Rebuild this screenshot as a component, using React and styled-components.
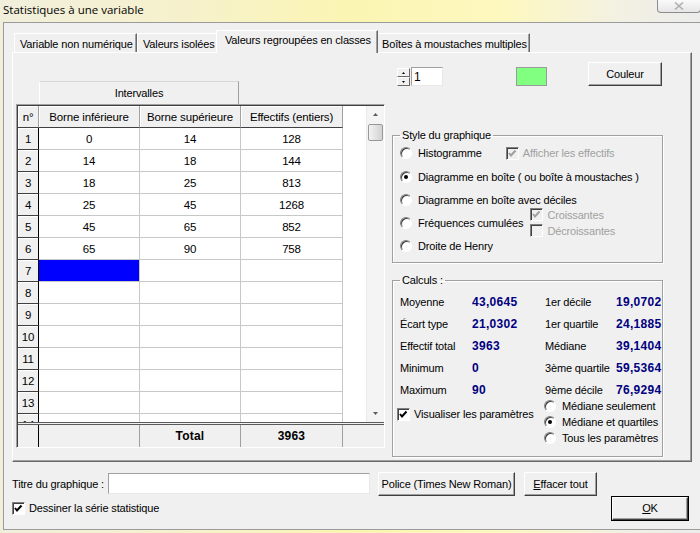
import styled, { createGlobalStyle } from "styled-components";

const GlobalStyle = createGlobalStyle`
  html, body {
    margin: 0;
    padding: 0;
  }
  body {
    width: 700px;
    height: 533px;
    overflow: hidden;
    background: #f0f0f0;
    font-family: "Liberation Sans", Arial, sans-serif;
    font-size: 11px;
    letter-spacing: -0.15px;
    color: #000;
  }
  * {
    box-sizing: border-box;
  }
`;

const Window = styled.div`
  width: 700px;
  height: 533px;
  display: flex;
  flex-direction: column;
  background: linear-gradient(90deg, #f1efdc 0%, #f6f1cd 25%, #fbf5b3 50%, #fdf8bf 72%, #f3f1e2 88%, #ececec 100%);
`;

const TitleBar = styled.div`
  height: 22px;
  display: flex;
  align-items: flex-start;
  justify-content: space-between;
`;

const Title = styled.div`
  font-family: "Open Sans", "Liberation Sans", sans-serif;
  font-size: 11.5px;
  letter-spacing: 0;
  padding: 2px 0 0 3px;
  color: #000;
`;

const CloseBtn = styled.div`
  width: 44px;
  height: 13px;
  border: 1px solid #8c8c8c;
  border-top: none;
  border-radius: 0 0 4px 4px;
  background: linear-gradient(#fafafa, #e6e6e6);
  display: flex;
  align-items: center;
  justify-content: center;
  margin-right: -1px;
`;

const Body = styled.div`
  flex: 1;
  margin: 0 0 3px 3px;
  border-top: 1px solid #9a9a9a;
  border-left: 1px solid #9a9a9a;
  border-bottom: 1px solid #9a9a9a;
  background: #f0f0f0;
  padding: 7px 8px 0 8px;
  display: flex;
  flex-direction: column;
`;

const TabStrip = styled.div`
  height: 22px;
  display: flex;
  align-items: flex-end;
  padding-left: 2px;
`;

const Tab = styled.div`
  width: ${(p) => p.$w}px;
  height: ${(p) => (p.$active ? 23 : 19)}px;
  margin-bottom: ${(p) => (p.$active ? -1 : 0)}px;
  margin-left: ${(p) => (p.$active ? -2 : 0)}px;
  margin-right: ${(p) => (p.$active ? -2 : 0)}px;
  position: relative;
  z-index: ${(p) => (p.$active ? 2 : 1)};
  background: #f0f0f0;
  border-top: 1px solid #fff;
  border-left: 1px solid #fff;
  border-right: 1px solid #696969;
  box-shadow: inset -1px 0 #a0a0a0;
  padding: ${(p) => (p.$active ? "3px 0 0 8px" : "4px 0 0 5px")};
  white-space: nowrap;
`;

const Panel = styled.div`
  height: 410px;
  border-top: 1px solid #fff;
  border-left: 1px solid #fff;
  border-right: 1px solid #696969;
  border-bottom: 1px solid #696969;
  box-shadow: inset -1px -1px #a0a0a0;
  padding: 9px 0 0 3px;
  display: flex;
  gap: 7px;
`;

const LeftCol = styled.div`
  width: 369px;
  padding-top: 19px;
  display: flex;
  flex-direction: column;
`;

const GroupHeader = styled.div`
  margin-left: 23px;
  width: 200px;
  height: 23px;
  background: #f0f0f0;
  border-top: 1px solid #d8d8d8;
  border-left: 1px solid #fff;
  border-right: 1px solid #a0a0a0;
  display: flex;
  align-items: center;
  justify-content: center;
`;

const GridFrame = styled.div`
  border-top: 1px solid #a0a0a0;
  border-left: 1px solid #a0a0a0;
  border-right: 1px solid #fff;
  border-bottom: 1px solid #fff;
  height: 344px;
`;

const GridInner = styled.div`
  height: 100%;
  border-top: 1px solid #404040;
  border-left: 1px solid #404040;
  background: #fff;
  display: flex;
  flex-direction: column;
`;

const GridBody = styled.div`
  height: 317px;
  display: flex;
  overflow: hidden;
`;

const Rows = styled.div`
  flex: 1;
  overflow: hidden;
`;

const Row = styled.div`
  display: flex;
  height: 22px;
`;

const kinds = {
  head: "background:#f0f0f0;border-right:1px solid #a0a0a0;border-bottom:1px solid #404040;box-shadow: inset 1px 1px #fff;",
  rowhead: "background:#f0f0f0;border-right:1px solid #000;border-bottom:1px solid #404040;box-shadow: inset 1px 1px #fff;",
  data: "background:#fff;border-right:1px solid #c8c8c8;border-bottom:1px solid #c8c8c8;",
  sel: "background:#0000ff;border-right:1px solid #c8c8c8;border-bottom:1px solid #c8c8c8;",
  total: "background:#f0f0f0;border-right:1px solid #a0a0a0;font-weight:bold;font-size:12px;letter-spacing:0.2px;",
  totalhead: "background:#f0f0f0;border-right:1px solid #000;",
};

const Cell = styled.div`
  width: ${(p) => p.$w}px;
  flex-shrink: 0;
  height: 22px;
  display: flex;
  align-items: center;
  justify-content: center;
  font-size: 11.5px;
  ${(p) => kinds[p.$kind]}
`;

const Filler = styled.div`
  flex: 1;
  background: ${(p) => (p.$gray ? "#f0f0f0" : "#fff")};
`;

const ScrollBar = styled.div`
  width: 18px;
  background: #f4f4f4;
  border-left: 1px solid #eaeaea;
  display: flex;
  flex-direction: column;
  align-items: center;
`;

const ScrollArrow = styled.div`
  height: 17px;
  display: flex;
  align-items: center;
  justify-content: center;
`;

const Thumb = styled.div`
  width: 15px;
  height: 17px;
  border: 1px solid #979797;
  border-radius: 2px;
  background: linear-gradient(90deg, #f3f3f3, #e2e2e2 50%, #d2d2d2);
  margin-top: 1px;
`;

const Track = styled.div`
  flex: 1;
`;

const TotalRow = styled.div`
  display: flex;
  height: 25px;
  border-top: 3px double #5a5a5a;
  background: #f0f0f0;
`;

const RightCol = styled.div`
  width: 271px;
  display: flex;
  flex-direction: column;
`;

const TopRow = styled.div`
  height: 24px;
  display: flex;
  align-items: flex-end;
  padding-left: 5px;
`;

const Spinner = styled.div`
  width: 13px;
  height: 18px;
  display: flex;
  flex-direction: column;
`;

const SpinBtn = styled.div`
  flex: 1;
  background: #f0f0f0;
  border-top: 1px solid #fff;
  border-left: 1px solid #fff;
  border-right: 1px solid #696969;
  border-bottom: 1px solid #696969;
  display: flex;
  align-items: center;
  justify-content: center;
`;

const NumInput = styled.div`
  width: 32px;
  height: 19px;
  margin-left: 1px;
  background: #fff;
  border-top: 1px solid #a0a0a0;
  border-left: 1px solid #a0a0a0;
  border-right: 1px solid #e8e8e8;
  border-bottom: 1px solid #e8e8e8;
  font-size: 12px;
  padding: 2px 0 0 2px;
`;

const Swatch = styled.div`
  width: 31px;
  height: 19px;
  margin-left: 73px;
  background: #80ff80;
  border: 1px solid #9a9a9a;
`;

const Button = styled.div`
  width: ${(p) => p.$w}px;
  height: ${(p) => p.$h || 24}px;
  margin-left: ${(p) => p.$ml || 0}px;
  align-self: ${(p) => p.$self || "auto"};
  background: #f0f0f0;
  border-top: 1px solid #fff;
  border-left: 1px solid #fff;
  border-right: 1px solid #404040;
  border-bottom: 1px solid #404040;
  box-shadow: inset -1px -1px #a0a0a0;
  display: flex;
  align-items: center;
  justify-content: center;
  white-space: nowrap;
  flex-shrink: 0;
  ${(p) => p.$default && "outline: 1px solid #000;"}
`;

const Group = styled.fieldset`
  margin: ${(p) => p.$mt}px 0 0 0;
  padding: 0 0 0 7px;
  border: 1px solid #a0a0a0;
  box-shadow: 1px 1px #fff, inset 1px 1px #fff;
  height: ${(p) => p.$h}px;
  display: flex;
  flex-direction: column;
`;

const Legend = styled.legend`
  padding: 0 2px;
`;

const OptRow = styled.div`
  height: ${(p) => p.$h || 22}px;
  display: flex;
  align-items: center;
  color: ${(p) => (p.$disabled ? "#a0a0a0" : "#000")};
  white-space: nowrap;
`;

const RadioDot = styled.span`
  width: 12px;
  height: 12px;
  border-radius: 50%;
  border: 1px solid;
  border-color: #808080 #fff #fff #808080;
  box-shadow: inset 1px 1px #404040;
  background: #fff;
  margin-right: 6px;
  flex-shrink: 0;
  display: flex;
  align-items: center;
  justify-content: center;
  &::after {
    content: "";
    width: 4px;
    height: 4px;
    border-radius: 50%;
    background: ${(p) => (p.$on ? "#000" : "transparent")};
  }
`;

const CheckBox = styled.span`
  width: 13px;
  height: 13px;
  flex-shrink: 0;
  border-top: 1px solid #808080;
  border-left: 1px solid #808080;
  border-right: 1px solid #fff;
  border-bottom: 1px solid #fff;
  box-shadow: inset 1px 1px #404040;
  background: ${(p) => (p.$disabled ? "#f0f0f0" : "#fff")};
  margin-right: 4px;
  display: flex;
  align-items: center;
  justify-content: center;
`;

const Radio = ({ on, children }) => (
  <>
    <RadioDot $on={on} />
    {children}
  </>
);

const Check = ({ on, disabled, children }) => (
  <>
    <CheckBox $disabled={disabled}>
      {on && (
        <svg width="9" height="9" viewBox="0 0 9 9">
          <polyline
            points="1,4 3,6.5 7.5,1.5"
            fill="none"
            stroke={disabled ? "#a0a0a0" : "#000"}
            strokeWidth="2"
          />
        </svg>
      )}
    </CheckBox>
    {children}
  </>
);

const Pad = styled.span`
  width: ${(p) => p.$w}px;
  flex-shrink: 0;
`;

const SubChecks = styled.div`
  display: flex;
  flex-direction: column;
  margin-left: 7px;
`;

const StatGrid = styled.div`
  display: grid;
  grid-template-columns: 72px 73px 71px minmax(0, 1fr);
  grid-auto-rows: 22px;
  margin-top: 5px;
  align-items: center;
  white-space: nowrap;
`;

const Value = styled.span`
  color: #000080;
  font-weight: bold;
  font-size: 12px;
  letter-spacing: 0.3px;
`;

const ParamArea = styled.div`
  display: flex;
  margin-top: -3px;
`;

const ParamCheck = styled.div`
  width: 147px;
  margin-left: -3px;
  padding-top: 8px;
`;

const ParamRadios = styled.div`
  display: flex;
  flex-direction: column;
`;

const Footer = styled.div`
  flex: 1;
  padding-top: 9px;
  display: flex;
  flex-direction: column;
`;

const FooterRow = styled.div`
  display: flex;
  align-items: center;
  height: 25px;
`;

const FieldLabel = styled.span`
  width: 96px;
  flex-shrink: 0;
`;

const TextInput = styled.div`
  width: 262px;
  height: 21px;
  margin-right: 8px;
  background: #fff;
  border-top: 1px solid #a0a0a0;
  border-left: 1px solid #a0a0a0;
  border-right: 1px solid #e8e8e8;
  border-bottom: 1px solid #e8e8e8;
`;

const BottomRow = styled.div`
  display: flex;
  align-items: center;
  height: 24px;
`;

const OkWrap = styled.div`
  margin-left: auto;
  margin-right: 4px;
`;

const Arrow = ({ down, size = 5, color = "#000" }) => {
  const h = Math.ceil(size / 2);
  return (
    <svg width={size} height={h} viewBox={`0 0 ${size} ${h}`}>
      <polygon
        points={down ? `0,0 ${size},0 ${size / 2},${h}` : `0,${h} ${size},${h} ${size / 2},0`}
        fill={color}
      />
    </svg>
  );
};

const data = [
  ["0", "14", "128"],
  ["14", "18", "144"],
  ["18", "25", "813"],
  ["25", "45", "1268"],
  ["45", "65", "852"],
  ["65", "90", "758"],
];

const stats = [
  ["Moyenne", "43,0645", "1er décile", "19,0702"],
  ["Écart type", "21,0302", "1er quartile", "24,1885"],
  ["Effectif total", "3963", "Médiane", "39,1404"],
  ["Minimum", "0", "3ème quartile", "59,5364"],
  ["Maximum", "90", "9ème décile", "76,9294"],
];

const widths = [21, 101, 101, 102];

export default function App() {
  const rows = Array.from({ length: 14 }, (_, i) => data[i] || ["", "", ""]);

  return (
    <>
      <GlobalStyle />
      <Window>
        <TitleBar>
          <Title>Statistiques à une variable</Title>
          <CloseBtn>
            <svg width="10" height="8" viewBox="0 0 10 8">
              <path d="M1 0.5 L9 7.5 M9 0.5 L1 7.5" stroke="#b0b0b0" strokeWidth="1.6" />
            </svg>
          </CloseBtn>
        </TitleBar>

        <Body>
          <TabStrip>
            <Tab $w={123}>Variable non numérique</Tab>
            <Tab $w={81}>Valeurs isolées</Tab>
            <Tab $w={162} $active>Valeurs regroupées en classes</Tab>
            <Tab $w={154}>Boîtes à moustaches multiples</Tab>
          </TabStrip>

          <Panel>
            <LeftCol>
              <GroupHeader>Intervalles</GroupHeader>
              <GridFrame>
                <GridInner>
                  <GridBody>
                    <Rows>
                      <Row>
                        <Cell $w={widths[0]} $kind="head">n°</Cell>
                        <Cell $w={widths[1]} $kind="head">Borne inférieure</Cell>
                        <Cell $w={widths[2]} $kind="head">Borne supérieure</Cell>
                        <Cell $w={widths[3]} $kind="head">Effectifs (entiers)</Cell>
                        <Filler />
                      </Row>
                      {rows.map((r, i) => (
                        <Row key={i}>
                          <Cell $w={widths[0]} $kind="rowhead">{i + 1}</Cell>
                          <Cell $w={widths[1]} $kind={i === 6 ? "sel" : "data"}>{r[0]}</Cell>
                          <Cell $w={widths[2]} $kind="data">{r[1]}</Cell>
                          <Cell $w={widths[3]} $kind="data">{r[2]}</Cell>
                          <Filler />
                        </Row>
                      ))}
                    </Rows>
                    <ScrollBar>
                      <ScrollArrow>
                        <Arrow size={5} color="#5a5a5a" />
                      </ScrollArrow>
                      <Thumb />
                      <Track />
                      <ScrollArrow>
                        <Arrow down size={5} color="#5a5a5a" />
                      </ScrollArrow>
                    </ScrollBar>
                  </GridBody>
                  <TotalRow>
                    <Cell $w={widths[0]} $kind="totalhead" />
                    <Cell $w={widths[1]} $kind="total" />
                    <Cell $w={widths[2]} $kind="total">Total</Cell>
                    <Cell $w={widths[3]} $kind="total">3963</Cell>
                    <Filler $gray />
                  </TotalRow>
                </GridInner>
              </GridFrame>
            </LeftCol>

            <RightCol>
              <TopRow>
                <Spinner>
                  <SpinBtn>
                    <Arrow size={3} />
                  </SpinBtn>
                  <SpinBtn>
                    <Arrow down size={3} />
                  </SpinBtn>
                </Spinner>
                <NumInput>1</NumInput>
                <Swatch />
                <Button $w={74} $h={24} $ml={41} $self="flex-start">
                  Couleur
                </Button>
              </TopRow>

              <Group $h={134} $mt={43}>
                <Legend>Style du graphique</Legend>
                <OptRow $h={24}>
                  <Radio>Histogramme</Radio>
                  <Pad $w={24} />
                  <OptRow $disabled>
                    <Check on disabled>Afficher les effectifs</Check>
                  </OptRow>
                </OptRow>
                <OptRow $h={23}>
                  <Radio on>Diagramme en boîte ( ou boîte à moustaches )</Radio>
                </OptRow>
                <OptRow $h={23}>
                  <Radio>Diagramme en boîte avec déciles</Radio>
                </OptRow>
                <OptRow $h={23}>
                  <Radio>Fréquences cumulées</Radio>
                  <SubChecks>
                    <OptRow $h={16} $disabled>
                      <Check on disabled>Croissantes</Check>
                    </OptRow>
                    <OptRow $h={16} $disabled>
                      <Check disabled>Décroissantes</Check>
                    </OptRow>
                  </SubChecks>
                </OptRow>
                <OptRow $h={24}>
                  <Radio>Droite de Henry</Radio>
                </OptRow>
              </Group>

              <Group $h={183} $mt={11}>
                <Legend>Calculs :</Legend>
                <StatGrid>
                  {stats.map((s) => [
                    <span key={s[0]}>{s[0]}</span>,
                    <Value key={s[0] + "v"}>{s[1]}</Value>,
                    <span key={s[2]}>{s[2]}</span>,
                    <Value key={s[2] + "v"}>{s[3]}</Value>,
                  ])}
                </StatGrid>
                <ParamArea>
                  <ParamCheck>
                    <OptRow $h={16}>
                      <Check on>Visualiser les paramètres</Check>
                    </OptRow>
                  </ParamCheck>
                  <ParamRadios>
                    <OptRow $h={16}>
                      <Radio>Médiane seulement</Radio>
                    </OptRow>
                    <OptRow $h={16}>
                      <Radio on>Médiane et quartiles</Radio>
                    </OptRow>
                    <OptRow $h={16}>
                      <Radio>Tous les paramètres</Radio>
                    </OptRow>
                  </ParamRadios>
                </ParamArea>
              </Group>
            </RightCol>
          </Panel>

          <Footer>
            <FooterRow>
              <FieldLabel>Titre du graphique :</FieldLabel>
              <TextInput />
              <Button $w={137}>Police (Times New Roman)</Button>
              <Button $w={73} $ml={9}>
                <u>E</u>ffacer tout
              </Button>
            </FooterRow>
            <BottomRow>
              <Check on>Dessiner la série statistique</Check>
              <OkWrap>
                <Button $w={76} $h={23} $default>
                  <u>O</u>K
                </Button>
              </OkWrap>
            </BottomRow>
          </Footer>
        </Body>
      </Window>
    </>
  );
}
